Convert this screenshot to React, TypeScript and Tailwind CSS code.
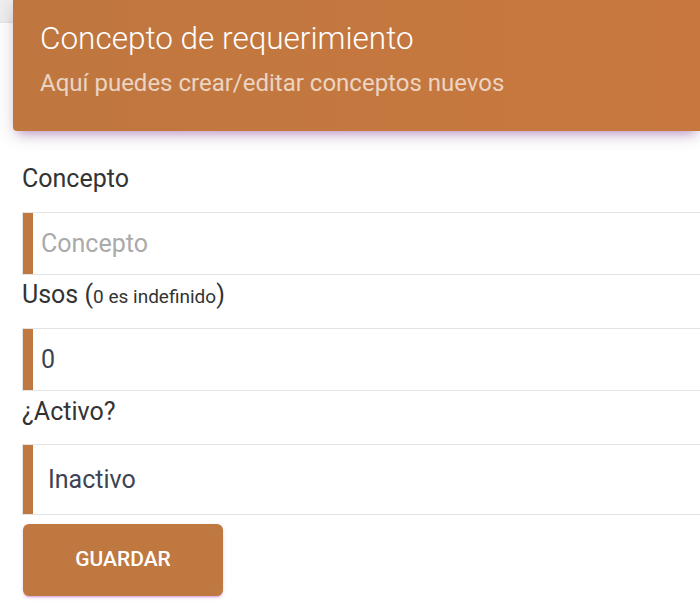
import React from "react";

const font = { fontFamily: "Roboto, 'Liberation Sans', sans-serif" };

function Field({ children, h }: { children: React.ReactNode; h: string }) {
  return (
    <div className={`flex w-full border border-r-0 border-[#e3e3e3] bg-white ${h}`}>
      <div className="w-[10px] shrink-0 bg-[#bf783f]" />
      <div className="flex flex-1 items-center">{children}</div>
    </div>
  );
}

export default function App() {
  return (
    <div className="flow-root h-[605px] w-[700px] overflow-hidden bg-[#eeeeee]" style={font}>
      <div className="flow-root mt-[23px] min-h-[600px] bg-white shadow-[0_1px_4px_0_rgba(0,0,0,0.14)]">
        <div className="-mt-[23px] ml-[13px] h-[131px] rounded-bl-[4px] bg-gradient-to-r from-[#bf773f] to-[#c8783e] pl-[27px] pt-[20px] shadow-[0_4px_20px_0_rgba(0,0,0,0.14),0_7px_10px_-5px_rgba(156,39,176,0.4)]">
          <div className="text-[31.5px] font-light leading-[38px] text-white">Concepto de requerimiento</div>
          <div className="mt-[11px] text-[24px] font-normal leading-[28px] text-white/70">
            Aquí puedes crear/editar conceptos nuevos
          </div>
        </div>
        <div className="pl-[22px]">
          <div className="mt-[33px] text-[25px] leading-[30px] text-[#333333]">Concepto</div>
          <div className="mt-[18px]">
            <Field h="h-[63px]">
              <span className="pl-[8px] text-[25px] text-[#aaaaaa]">Concepto</span>
            </Field>
          </div>
          <div className="mt-[5px] h-[30px] text-[25px] leading-[30px] text-[#333333]">
            Usos (<span className="text-[19px] leading-none">0 es indefinido</span>)
          </div>
          <div className="mt-[18px]">
            <Field h="h-[63px]">
              <span className="pl-[8px] text-[25px] text-[#3c4453]">0</span>
            </Field>
          </div>
          <div className="mt-[6px] text-[25px] leading-[30px] text-[#333333]">¿Activo?</div>
          <div className="mt-[17px]">
            <Field h="h-[71px]">
              <span className="pl-[15px] text-[25px] text-[#3c4453]">Inactivo</span>
            </Field>
          </div>
          <button className="ml-[1px] mt-[9px] flex h-[72px] w-[200px] items-center justify-center rounded-[6px] bg-[#bf783f] text-[21px] font-medium text-white shadow-[0_2px_2px_0_rgba(156,39,176,0.14),0_3px_1px_-2px_rgba(156,39,176,0.2),0_1px_5px_0_rgba(156,39,176,0.12)]">
            GUARDAR
          </button>
        </div>
      </div>
    </div>
  );
}
